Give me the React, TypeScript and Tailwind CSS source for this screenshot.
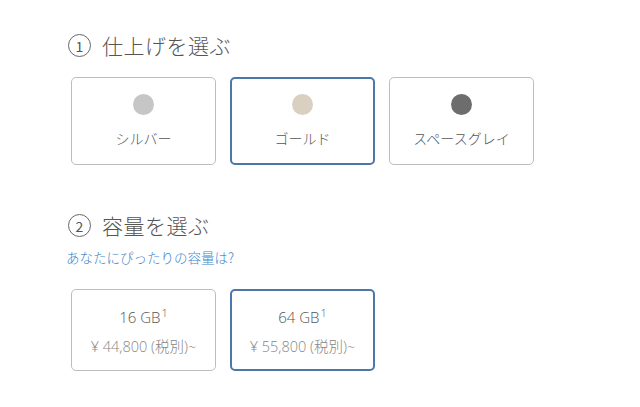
import type { ReactNode } from "react";

const jp = "font-['Noto_Sans_CJK_JP',sans-serif]";
const latin = "font-['Open_Sans','Noto_Sans_CJK_JP',sans-serif]";

const colors = [
    { name: "シルバー", swatch: "bg-[#c6c6c6]", selected: false },
    { name: "ゴールド", swatch: "bg-[#d9d0c1]", selected: true },
    { name: "スペースグレイ", swatch: "bg-[#6d6d6d]", selected: false },
];

const sizes = [
    { gb: "16 GB", price: "¥ 44,800 (税別)~", selected: false },
    { gb: "64 GB", price: "¥ 55,800 (税別)~", selected: true },
];

function Heading({ num, children }: { num: number; children: ReactNode }) {
    return (
        <h2 className="flex items-center gap-[11px] text-[21px] font-light text-[#555] leading-none">
            <span className="flex items-center justify-center w-[23px] h-[23px] rounded-full border-[1.5px] border-[#666] text-[14px] font-normal text-[#555]">
                {num}
            </span>
            <span className="tracking-[0.5px]">{children}</span>
        </h2>
    );
}

function Card({ selected, children, h }: { selected: boolean; children: ReactNode; h: string }) {
    return (
        <div
            className={`w-[145px] ${h} rounded-[5px] flex flex-col items-center bg-white ${
                selected ? "border-2 border-[#4b78a9] pt-[15px]" : "border border-[#bdbdbd] pt-[16px]"
            }`}
        >
            {children}
        </div>
    );
}

export default function App() {
    return (
        <div className={`w-[640px] h-[407px] bg-white pl-[68px] pt-[34px] ${jp}`}>
            <Heading num={1}>仕上げを選ぶ</Heading>

            <div className="flex gap-[14px] mt-[20px] ml-[3px]">
                {colors.map((c) => (
                    <Card key={c.name} selected={c.selected} h="h-[88px]">
                        <div className={`w-[21px] h-[21px] rounded-full ${c.swatch}`} />
                        <p className="mt-[16px] text-[14px] font-light text-[#555] leading-none">{c.name}</p>
                    </Card>
                ))}
            </div>

            <div className="mt-[49px]">
                <Heading num={2}>容量を選ぶ</Heading>
            </div>
            <p className="mt-[14px] -ml-[2px] text-[13.5px] font-light text-[#3f86c8] leading-none">
                あなたにぴったりの容量は?
            </p>

            <div className="flex gap-[14px] mt-[24px] ml-[3px]">
                {sizes.map((s) => (
                    <Card key={s.gb} selected={s.selected} h="h-[82px]">
                        <p className={`mt-[4px] text-[15px] font-light text-[#555] leading-none ${latin}`}>
                            {s.gb}
                            <sup className="text-[11px] relative -top-[6px] ml-[1px]">1</sup>
                        </p>
                        <p className={`mt-[15px] text-[14.5px] font-light text-[#858585] leading-none ${latin}`}>
                            {s.price}
                        </p>
                    </Card>
                ))}
            </div>
        </div>
    );
}
